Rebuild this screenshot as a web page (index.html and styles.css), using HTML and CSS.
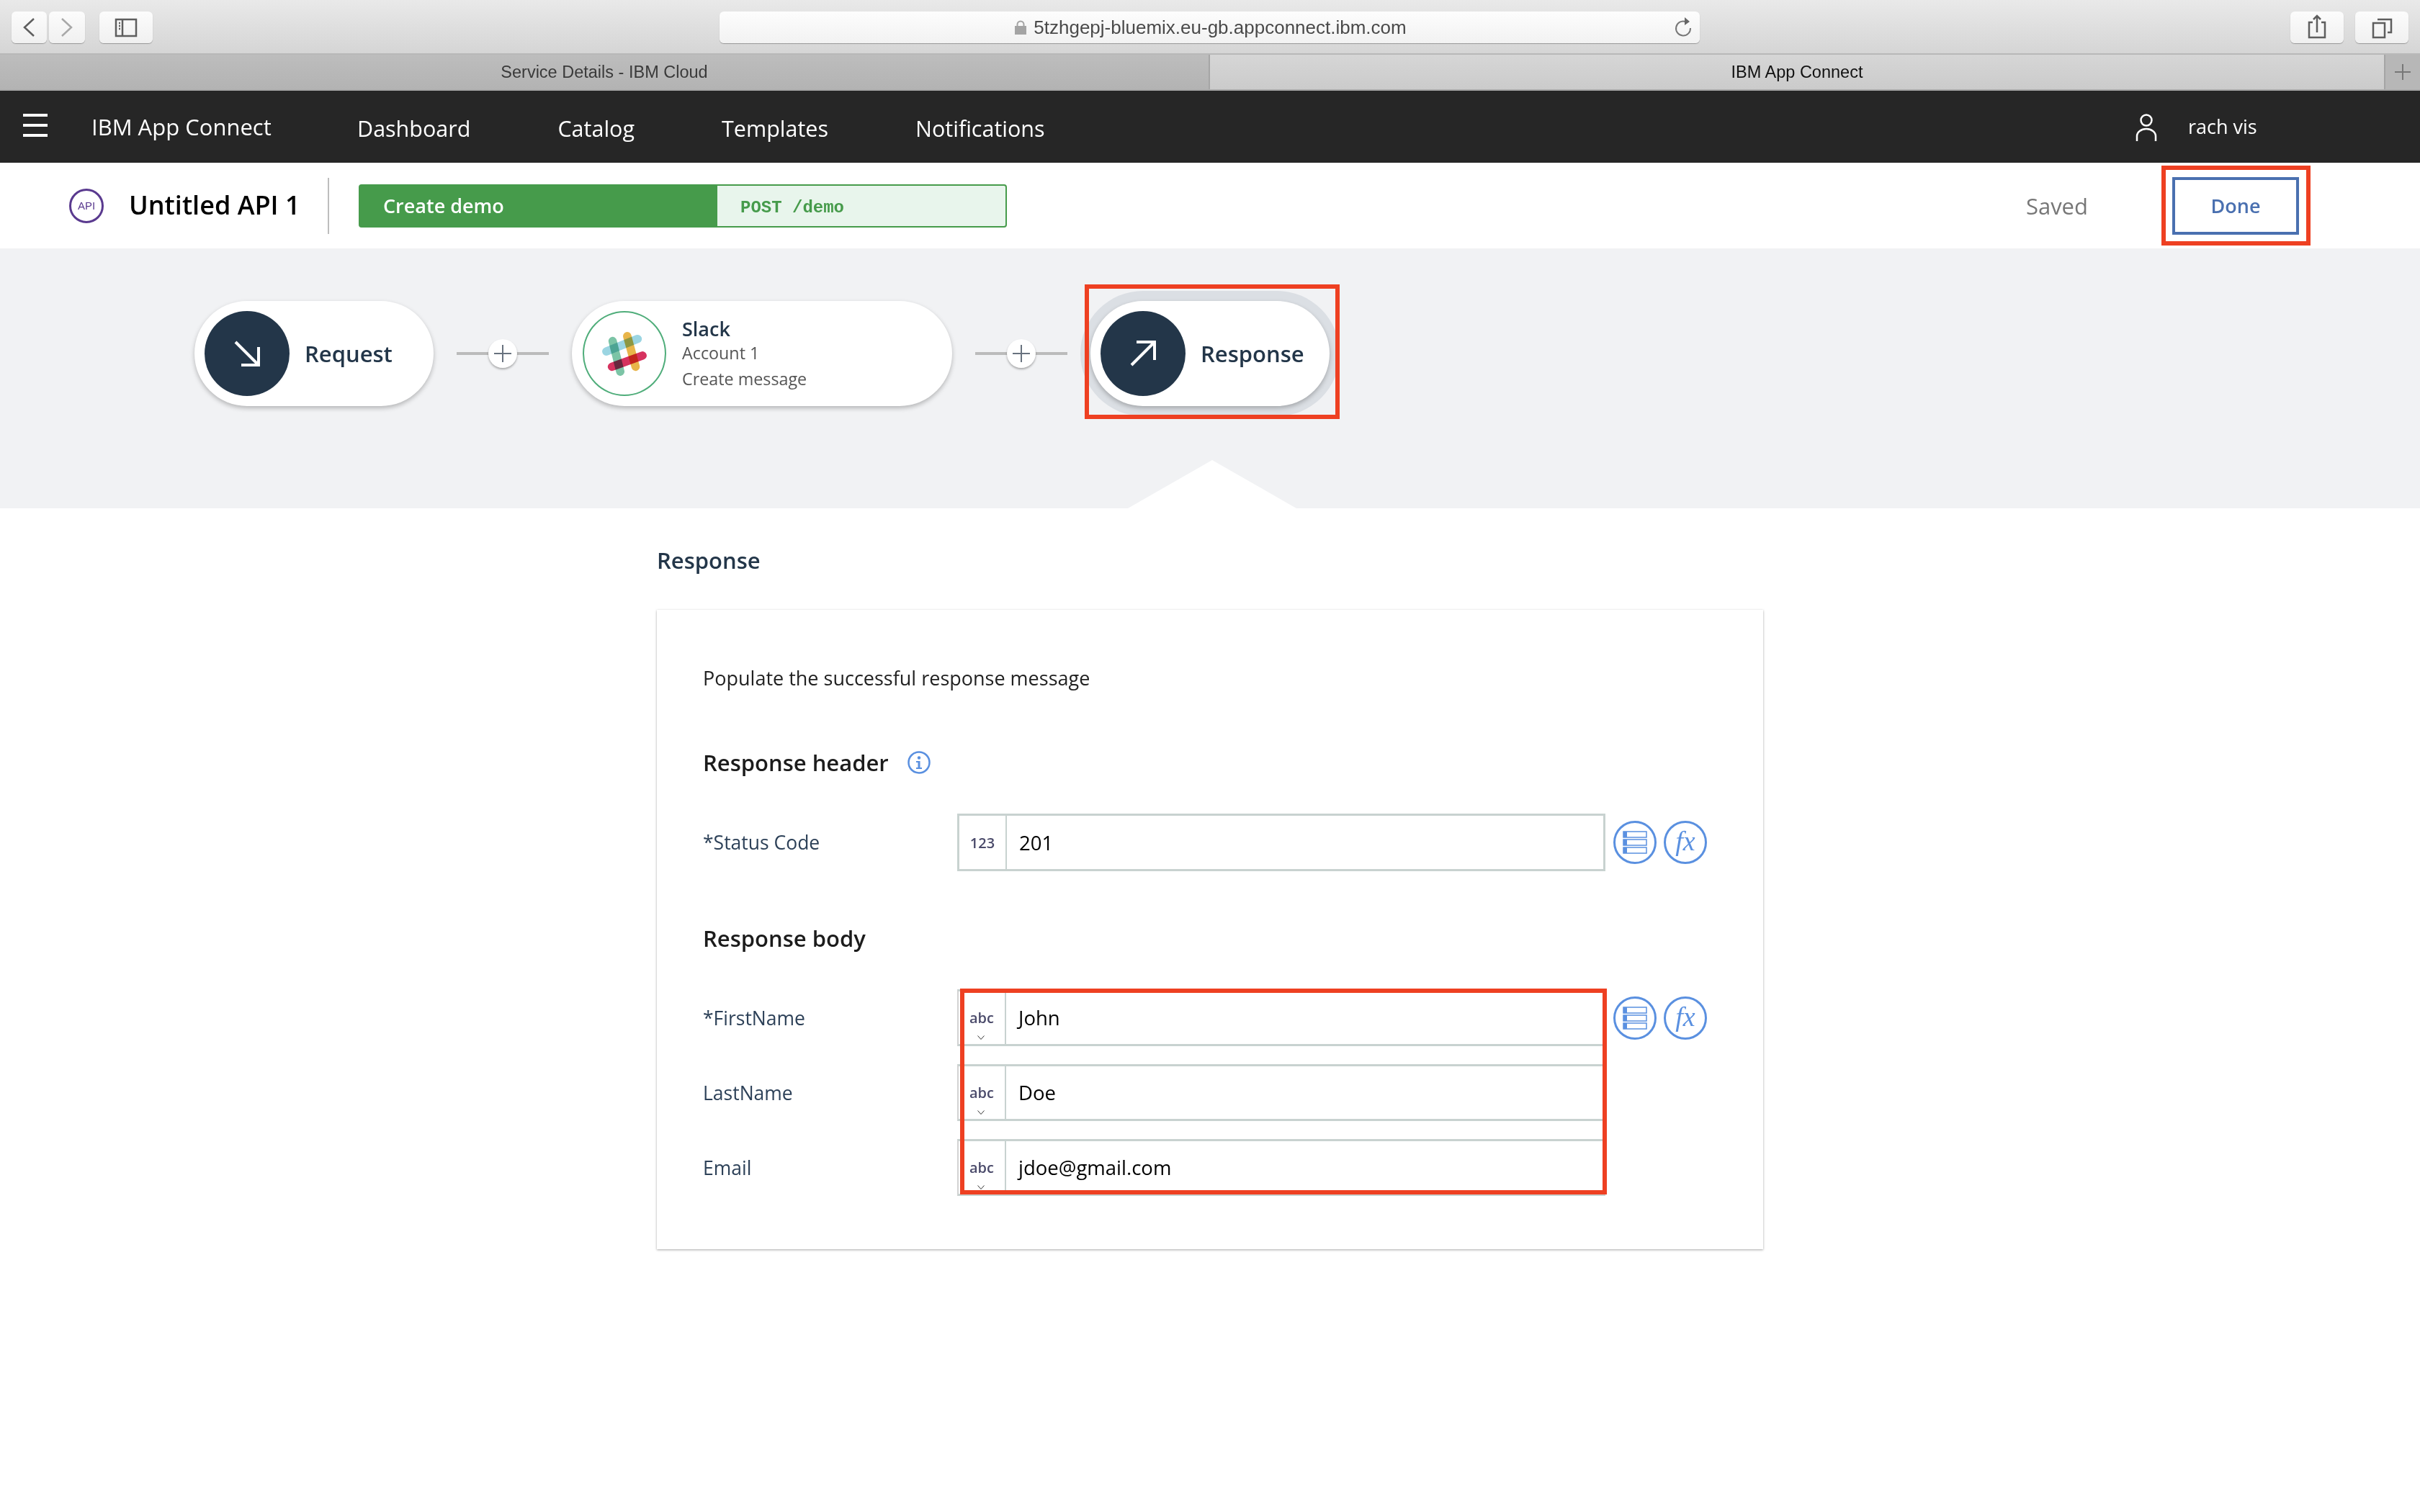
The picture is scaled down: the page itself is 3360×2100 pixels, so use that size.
FILE: index.html
```html
<!DOCTYPE html>
<html>
  <head>
    <meta charset="UTF-8">
    <title>IBM App Connect</title>
    <link rel="stylesheet" href="styles.css">
  </head>
  <body>
    <div class="toolbar">
      <div class="tool-btn nav-btn">
        <svg class="tool-icon" viewBox="0 0 49 44"><path d="M31 10 L18 22 L31 34" class="dark-line"/></svg>
      </div>
      <div class="tool-btn nav-btn nav-next">
        <svg class="tool-icon" viewBox="0 0 50 44"><path d="M18 10 L31 22 L18 34" class="soft-line"/></svg>
      </div>
      <div class="tool-btn wide-btn side-btn">
        <svg class="tool-icon" viewBox="0 0 74 44"><rect x="23" y="11" width="28" height="23" class="dark-line"/><path d="M32 11 V34" class="dark-line"/><path d="M27 16 H29 M27 20 H29 M27 24 H29" class="dark-line"/></svg>
      </div>
      <div class="url-field">
        <span class="url-mid">
          <svg class="lock" viewBox="0 0 16 20"><path d="M3.5 9 V6 a4.5 4.5 0 0 1 9 0 V9" fill="none" stroke="#a4a4a4" stroke-width="2"/><rect x="0" y="8" width="16" height="12" fill="#a4a4a4"/></svg>
          <span class="url-text">5tzhgepj-bluemix.eu-gb.appconnect.ibm.com</span>
        </span>
        <svg class="reload" viewBox="0 0 24 28"><path d="M15 6 A10 10 0 1 0 22 15" fill="none" stroke="#777" stroke-width="2"/><path d="M14 0 L21 6 L14 11 Z" fill="#666"/></svg>
      </div>
      <div class="tool-btn wide-btn share-btn">
        <svg class="tool-icon" viewBox="0 0 74 44"><path d="M31 15 H26 V36 H48 V15 H43 M37 29 V7 M32 11 L37 6 L42 11" class="dark-line"/></svg>
      </div>
      <div class="tool-btn wide-btn">
        <svg class="tool-icon" viewBox="0 0 74 44"><rect x="25" y="16" width="16" height="20" class="dark-line"/><path d="M31 11 H50 V29 H45" class="dark-line"/></svg>
      </div>
    </div>

    <div class="tabbar">
      <div class="tab tab-back">Service Details - IBM Cloud</div>
      <div class="tab tab-front">IBM App Connect</div>
      <div class="tab-add">
        <svg class="tab-plus" viewBox="0 0 22 22"><path d="M11 0 V22 M0 11 H22" stroke="#777" stroke-width="2"/></svg>
      </div>
    </div>

    <header class="topnav">
      <div class="burger"><span></span><span></span><span></span></div>
      <div class="brand">IBM App Connect</div>
      <nav class="nav-links">
        <a>Dashboard</a>
        <a>Catalog</a>
        <a>Templates</a>
        <a>Notifications</a>
      </nav>
      <div class="user">
        <svg class="user-icon" viewBox="0 0 30 38"><circle cx="15" cy="9" r="7.5" fill="none" stroke="#fff" stroke-width="2.5"/><path d="M2 38 V31 a13 10 0 0 1 26 0 V38" fill="none" stroke="#fff" stroke-width="2.5"/></svg>
        <span class="user-name">rach vis</span>
      </div>
    </header>

    <div class="subbar">
      <div class="api-badge">API</div>
      <div class="api-title">Untitled API 1</div>
      <div class="op-tag">
        <div class="op-name">Create demo</div>
        <div class="op-path">POST /demo</div>
      </div>
      <div class="saved">Saved</div>
      <button class="done-btn">Done</button>
    </div>

    <section class="stage">
      <div class="flow">
        <div class="pill pill-small">
          <div class="node-dot">
            <svg class="node-arrow" viewBox="0 0 36 36"><path d="M2 2 L33 33 M34 9 V34 H10" fill="none" stroke="#fff" stroke-width="4"/></svg>
          </div>
          <div class="pill-title">Request</div>
        </div>
        <div class="link"><span class="link-plus"><svg viewBox="0 0 24 24"><path d="M12 0 V24 M0 12 H24" stroke="#68727e" stroke-width="2"/></svg></span></div>
        <div class="pill pill-slack">
          <div class="slack-dot">
            <svg class="slack-logo" viewBox="0 0 116 116">
              <g fill="none" stroke-width="12" stroke-linecap="round">
                <path class="mix" d="M41 40 L52 84" stroke="#7cc4a6"/>
                <path class="mix" d="M62 33 L74 77" stroke="#e8b54a"/>
                <path class="mix" d="M32 55 L77 37" stroke="#9bd5e2"/>
                <path class="mix" d="M40 77 L84 61" stroke="#d6325f"/>
              </g>
            </svg>
          </div>
          <div class="slack-text">
            <div class="slack-name">Slack</div>
            <div class="slack-sub">Account 1</div>
            <div class="slack-sub">Create message</div>
          </div>
        </div>
        <div class="link"><span class="link-plus"><svg viewBox="0 0 24 24"><path d="M12 0 V24 M0 12 H24" stroke="#68727e" stroke-width="2"/></svg></span></div>
        <div class="pill pill-small pill-active">
          <div class="node-dot">
            <svg class="node-arrow" viewBox="0 0 36 36"><path d="M2 34 L33 3 M9 2 H34 V27" fill="none" stroke="#fff" stroke-width="4"/></svg>
          </div>
          <div class="pill-title">Response</div>
        </div>
      </div>
      <div class="pointer"></div>
    </section>

    <main class="content">
      <h2 class="section-title">Response</h2>
      <div class="card">
        <p class="intro">Populate the successful response message</p>

        <h3 class="group-title">Response header
          <svg class="info-icon" viewBox="0 0 32 32"><circle cx="16" cy="16" r="14.5" fill="none" stroke="#5a90e0" stroke-width="2.5"/><circle cx="16" cy="9.5" r="2.2" fill="#5a90e0"/><path d="M12 14 H17.5 V23 H20 V25 H12 V23 H14.5 V16 H12 Z" fill="#5a90e0"/></svg>
        </h3>

        <div class="form-row">
          <label class="field-label">*Status Code</label>
          <div class="field field-box">
            <div class="type-cell">123</div>
            <div class="field-value">201</div>
          </div>
          <div class="row-actions">
            <span class="round-btn"><svg class="data-icon" viewBox="0 0 34 32"><g fill="#fff" stroke="#5a90e0" stroke-width="1.5"><rect x="1" y="1" width="32" height="8"/><rect x="1" y="12" width="32" height="8"/><rect x="1" y="23" width="32" height="8"/></g><path d="M1 1 H6 V9 H1 Z M1 12 H6 V20 H1 Z M1 23 H6 V31 H1 Z" fill="#5a90e0"/></svg></span>
            <span class="round-btn fx">fx</span>
          </div>
        </div>

        <h3 class="group-title group-body">Response body</h3>

        <div class="form-rows">
          <div class="form-row">
            <label class="field-label">*FirstName</label>
            <div class="field field-line">
              <div class="type-cell type-pick">abc<svg class="chev" viewBox="0 0 10 6"><path d="M0.5 0.5 L5 5.5 L9.5 0.5" fill="none" stroke="#333" stroke-width="1"/></svg></div>
              <div class="field-value">John</div>
            </div>
            <div class="row-actions">
              <span class="round-btn"><svg class="data-icon" viewBox="0 0 34 32"><g fill="#fff" stroke="#5a90e0" stroke-width="1.5"><rect x="1" y="1" width="32" height="8"/><rect x="1" y="12" width="32" height="8"/><rect x="1" y="23" width="32" height="8"/></g><path d="M1 1 H6 V9 H1 Z M1 12 H6 V20 H1 Z M1 23 H6 V31 H1 Z" fill="#5a90e0"/></svg></span>
              <span class="round-btn fx">fx</span>
            </div>
          </div>
          <div class="form-row">
            <label class="field-label">LastName</label>
            <div class="field field-line">
              <div class="type-cell type-pick">abc<svg class="chev" viewBox="0 0 10 6"><path d="M0.5 0.5 L5 5.5 L9.5 0.5" fill="none" stroke="#333" stroke-width="1"/></svg></div>
              <div class="field-value">Doe</div>
            </div>
          </div>
          <div class="form-row">
            <label class="field-label">Email</label>
            <div class="field field-line">
              <div class="type-cell type-pick">abc<svg class="chev" viewBox="0 0 10 6"><path d="M0.5 0.5 L5 5.5 L9.5 0.5" fill="none" stroke="#333" stroke-width="1"/></svg></div>
              <div class="field-value">jdoe@gmail.com</div>
            </div>
          </div>
        </div>
      </div>
    </main>

    <!-- red annotation boxes on top of the screenshot -->
    <div class="mark mark-done"></div>
    <div class="mark mark-response"></div>
    <div class="mark mark-fields"></div>
  </body>
</html>
```

FILE: styles.css
```css
* {
  box-sizing: border-box;
}

body {
  margin: 0;
  height: 2100px;
  overflow: hidden;
  position: relative;
  background: #fff;
  font-family: "Open Sans", "Liberation Sans", sans-serif;
  color: #152935;
}

/* browser chrome */
.toolbar {
  height: 76px;
  padding: 16px 16px 0;
  display: flex;
  align-items: flex-start;
  background: linear-gradient(#e9e9e9, #d5d5d5);
  border-bottom: 2px solid #b8b8b8;
}

.tool-btn {
  height: 44px;
  background: linear-gradient(#fcfcfc, #f0f0f0);
  border-radius: 6px;
  box-shadow: 0 1px 1px rgba(0, 0, 0, 0.3);
}

.nav-btn {
  width: 49px;
}

.nav-next {
  width: 50px;
  margin-left: 3px;
}

.wide-btn {
  width: 74px;
}

.side-btn {
  margin-left: 20px;
}

.share-btn {
  margin-right: 16px;
}

.tool-icon {
  display: block;
  width: 100%;
  height: 100%;
}

.dark-line {
  fill: none;
  stroke: #5e5e5e;
  stroke-width: 2.5;
}

.soft-line {
  fill: none;
  stroke: #a8a8a8;
  stroke-width: 2.5;
}

.url-field {
  width: 1361px;
  height: 44px;
  margin: 0 auto 0 787px;
  position: relative;
  display: flex;
  align-items: center;
  justify-content: center;
  background: linear-gradient(#fdfdfd, #f2f2f2);
  border-radius: 6px;
  box-shadow: 0 1px 1px rgba(0, 0, 0, 0.3);
}

.url-mid {
  display: flex;
  align-items: center;
  gap: 10px;
  margin-left: 3px;
}

.lock {
  width: 16px;
  height: 20px;
}

.url-text {
  font-family: "Liberation Sans", sans-serif;
  font-size: 26px;
  color: #4a4a4a;
}

.reload {
  position: absolute;
  right: 11px;
  top: 8px;
  width: 24px;
  height: 28px;
}

.tabbar {
  height: 50px;
  display: flex;
  border-bottom: 2px solid #a9a9a9;
  font-family: "Liberation Sans", sans-serif;
  font-size: 23.5px;
}

.tab {
  display: flex;
  align-items: center;
  justify-content: center;
}

.tab-back {
  width: 1680px;
  color: #3a3a3a;
  background: linear-gradient(#bdbdbd, #b3b3b3);
  border-right: 2px solid #a5a5a5;
}

.tab-front {
  width: 1630px;
  color: #111;
  background: linear-gradient(#d6d6d6, #cbcbcb);
}

.tab-add {
  flex: 1;
  display: flex;
  align-items: center;
  justify-content: center;
  background: #b7b7b7;
  border-left: 2px solid #a5a5a5;
}

.tab-plus {
  width: 22px;
  height: 22px;
}

/* app header */
.topnav {
  height: 100px;
  background: #262626;
  color: #fff;
  display: flex;
  align-items: center;
  font-size: 30.5px;
}

.burger {
  width: 34px;
  height: 32px;
  margin: -4px 0 0 32px;
  display: flex;
  flex-direction: column;
  justify-content: space-between;
}

.burger span {
  height: 4px;
  background: #fff;
}

.brand {
  width: 369px;
  margin: 0 0 0 61px;
  font-size: 31px;
}

.nav-links {
  display: flex;
  gap: 121px;
  margin-top: 4px;
}

.user {
  margin-left: auto;
  width: 395px;
  display: flex;
  align-items: center;
  gap: 43px;
  font-size: 27px;
}

.user-icon {
  width: 30px;
  height: 38px;
  margin-top: 2px;
}

.user-name {
  margin-top: -2px;
}

/* api title bar */
.subbar {
  height: 119px;
  padding-left: 96px;
  display: flex;
  align-items: center;
  background: #fff;
  box-shadow: 0 2px 3px rgba(0, 0, 0, 0.16);
  position: relative;
}

.api-badge {
  width: 48px;
  height: 48px;
  border: 3px solid #5a3a8f;
  border-radius: 50%;
  color: #5a3a8f;
  display: flex;
  align-items: center;
  justify-content: center;
  font-family: "Liberation Sans", sans-serif;
  font-size: 15px;
}

.api-title {
  width: 278px;
  height: 78px;
  margin-left: 35px;
  padding-bottom: 2px;
  display: flex;
  align-items: center;
  border-right: 2px solid #bdbdbd;
  font-size: 36px;
  font-weight: 600;
  color: #000;
}

.op-tag {
  width: 900px;
  height: 60px;
  margin-left: 41px;
  display: flex;
  border: 2px solid #469b4b;
  border-radius: 4px;
  background: #e8f5ec;
}

.op-name {
  width: 496px;
  padding-left: 32px;
  display: flex;
  align-items: center;
  background: #469b4b;
  color: #fff;
  font-size: 27px;
  font-weight: 600;
}

.op-path {
  padding: 5px 0 0 32px;
  display: flex;
  align-items: center;
  color: #469b4b;
  font-family: "Liberation Mono", monospace;
  font-size: 24px;
  font-weight: 700;
}

.saved {
  margin-left: auto;
  font-size: 31px;
  color: #777;
}

.done-btn {
  width: 176px;
  height: 80px;
  margin: 0 168px 0 117px;
  background: #fff;
  border: 4px solid #4a70b0;
  color: #4a70b0;
  font-family: inherit;
  font-size: 27px;
  font-weight: 600;
}

/* flow canvas */
.stage {
  height: 361px;
  padding: 73px 0 0 270px;
  background: #f1f2f4;
  position: relative;
}

.flow {
  display: flex;
  align-items: center;
  gap: 32px;
}

.pill {
  height: 146px;
  padding: 14px;
  display: flex;
  align-items: center;
  background: #fff;
  border-radius: 73px;
  box-shadow: 0 3px 6px rgba(0, 0, 0, 0.25);
}

.pill-small {
  width: 332px;
}

.pill-active {
  box-shadow: 0 3px 6px rgba(0, 0, 0, 0.25), 0 0 0 14px #dbdfe4;
}

.pill-slack {
  width: 528px;
  padding-left: 15px;
}

.node-dot {
  width: 118px;
  height: 118px;
  flex: none;
  border-radius: 50%;
  background: #233649;
  display: flex;
  align-items: center;
  justify-content: center;
}

.node-arrow {
  width: 36px;
  height: 36px;
}

.pill-title {
  margin-left: 21px;
  font-size: 31px;
  font-weight: 600;
  color: #233649;
}

.slack-dot {
  width: 116px;
  height: 118px;
  flex: none;
  border: 2.5px solid #4fad7a;
  border-radius: 50%;
}

.slack-logo {
  display: block;
  width: 100%;
  height: 100%;
}

.mix {
  mix-blend-mode: multiply;
}

.slack-text {
  margin: 4px 0 0 22px;
}

.slack-name {
  height: 30px;
  line-height: 30px;
  font-size: 27px;
  font-weight: 600;
  color: #233649;
}

.slack-sub {
  height: 36px;
  line-height: 36px;
  font-size: 23.3px;
  color: #555;
}

.link {
  width: 128px;
  height: 4px;
  background: #bbb;
  display: flex;
  align-items: center;
  justify-content: center;
}

.link-plus {
  width: 40px;
  height: 40px;
  flex: none;
  border-radius: 50%;
  background: #fff;
  box-shadow: 0 2px 3px rgba(0, 0, 0, 0.3);
  display: flex;
  align-items: center;
  justify-content: center;
}

.link-plus svg {
  width: 24px;
  height: 24px;
}

.pointer {
  position: absolute;
  left: 1566px;
  bottom: 0;
  width: 234px;
  height: 67px;
  background: #fff;
  clip-path: polygon(50% 0, 100% 100%, 0 100%);
}

/* form */
.content {
  padding: 52px 0 0 912px;
}

.section-title {
  margin: 0 0 49px;
  line-height: 40px;
  font-size: 31px;
  font-weight: 600;
  color: #233649;
}

.card {
  width: 1536px;
  height: 888px;
  padding: 75px 0 0 64px;
  background: #fff;
  box-shadow: 0 1px 3px rgba(0, 0, 0, 0.35);
}

.intro {
  margin: 0;
  line-height: 40px;
  font-size: 27px;
  color: #222;
}

.group-title {
  margin: 77px 0 51px;
  height: 40px;
  display: flex;
  align-items: center;
  font-size: 31px;
  font-weight: 600;
  color: #1c1c1c;
}

.group-body {
  margin-top: 73px;
  margin-bottom: 51px;
}

.info-icon {
  width: 32px;
  height: 32px;
  margin-left: 26px;
}

.form-rows {
  display: flex;
  flex-direction: column;
  gap: 25px;
}

.form-row {
  display: flex;
  align-items: center;
}

.field-label {
  width: 353px;
  font-size: 26.5px;
  color: #2d4158;
}

.field {
  width: 900px;
  display: flex;
  background: #fff;
}

.field-box {
  height: 80px;
  border: 3px solid #c8d2d0;
}

.field-line {
  height: 79px;
  border-top: 3px solid #c8d2d0;
  border-bottom: 3px solid #c8d2d0;
  border-left: 2px solid #d2d2d2;
  border-right: 2px solid #d2d2d2;
}

.type-cell {
  width: 66px;
  flex: none;
  position: relative;
  display: flex;
  align-items: center;
  justify-content: center;
  border-right: 2px solid #c8d2d0;
  font-size: 20px;
  font-weight: 600;
  color: #4a4a6a;
}

.chev {
  position: absolute;
  left: 26px;
  bottom: 6px;
  width: 10px;
  height: 6px;
}

.field-value {
  padding-left: 17px;
  display: flex;
  align-items: center;
  font-size: 27.5px;
  color: #000;
}

.row-actions {
  margin-left: 11px;
  display: flex;
  gap: 10px;
}

.round-btn {
  width: 60px;
  height: 60px;
  border: 3px solid #5a90e0;
  border-radius: 50%;
  display: flex;
  align-items: center;
  justify-content: center;
  color: #5a90e0;
}

.data-icon {
  width: 34px;
  height: 32px;
}

.fx {
  font-family: "Liberation Serif", serif;
  font-style: italic;
  font-size: 38px;
  padding-bottom: 4px;
}

/* annotation boxes */
.mark {
  position: absolute;
  border: 6px solid #ee4022;
}

.mark-done {
  left: 3001px;
  top: 230px;
  width: 207px;
  height: 111px;
}

.mark-response {
  left: 1506px;
  top: 395px;
  width: 354px;
  height: 187px;
}

.mark-fields {
  left: 1333px;
  top: 1373px;
  width: 898px;
  height: 286px;
}
```
